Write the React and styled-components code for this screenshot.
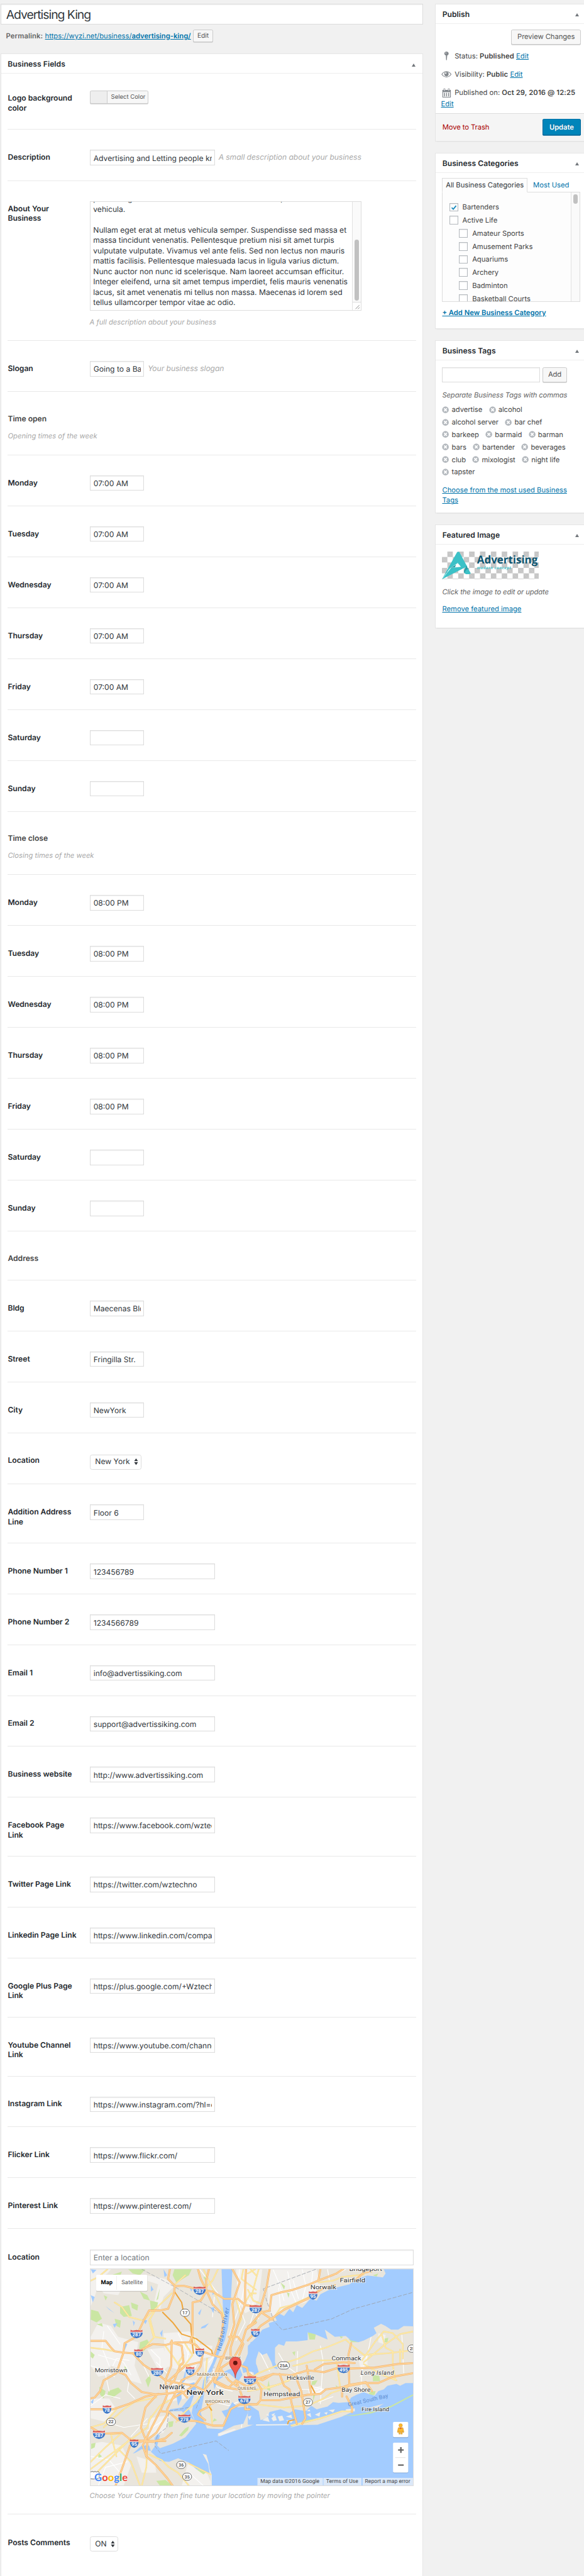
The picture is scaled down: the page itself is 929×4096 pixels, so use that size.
import React from 'react';
import styled, { createGlobalStyle } from 'styled-components';

const GlobalStyle = createGlobalStyle`
  *, *::before, *::after { box-sizing: border-box; }
  html, body { margin: 0; padding: 0; background: #f1f1f1; overflow: hidden; }
  body { font-family: Inter, "Liberation Sans", sans-serif; text-rendering: geometricPrecision; }
  input, button { text-rendering: geometricPrecision; }
`;

const Page = styled.div`
  zoom: 0.8654;
  display: flex;
  align-items: flex-start;
  gap: 22px;
  width: 1073.5px;
  height: 4733px;
  padding-left: 1px;
  overflow: hidden;
  background: #f1f1f1;
  color: #444;
  font-size: 13px;
  line-height: 19px;
`;

const Main = styled.main`
  display: flex;
  flex-direction: column;
  flex: none;
  width: 777px;
  height: 100%;
  padding-top: 7px;
`;

const Sidebar = styled.aside`
  display: flex;
  flex-direction: column;
  gap: 20.5px;
  flex: none;
  width: 280px;
  padding-top: 7px;
`;

const TitleField = styled.input`
  width: 100%;
  height: 38px;
  padding: 2px 8px 0 9px;
  border: 1px solid #ddd;
  background: #fff;
  box-shadow: inset 0 1px 2px rgba(0, 0, 0, 0.07);
  color: #32373c;
  font: 400 22.4px/34px Inter, sans-serif;
  letter-spacing: -1.18px;
  outline: none;
`;

const Permalink = styled.div`
  display: flex;
  align-items: center;
  gap: 4px;
  height: 24px;
  margin: 9px 0 20.5px 10px;
  color: #666;
  strong { font-weight: 600; letter-spacing: 0.1px; }
`;

const Link = styled.a`
  color: #0073aa;
  text-decoration: ${(p) => (p.$plain ? 'none' : 'underline')};
  font-weight: ${(p) => (p.$strong ? 600 : 400)};
  text-underline-offset: 1px;
`;

const Button = styled.button`
  flex: none;
  width: ${(p) => p.$w}px;
  height: ${(p) => p.$h || 28}px;
  padding: 0;
  border: 1px solid #ccc;
  border-radius: 3px;
  background: #f7f7f7;
  box-shadow: 0 1px 0 #ccc;
  color: #555;
  font: 400 ${(p) => p.$size || 13}px/1 Inter, sans-serif;
  letter-spacing: -0.1px;
`;

const PrimaryButton = styled(Button)`
  border-color: #0073aa #006799 #006799;
  background: #0085ba;
  box-shadow: 0 1px 0 #006799;
  color: #fff;
  font-weight: 600;
  text-shadow: 0 -1px 1px #006799;
`;

const Box = styled.section`
  display: flex;
  flex-direction: column;
  flex: ${(p) => (p.$fill ? '1' : 'none')};
  height: ${(p) => (p.$h ? `${p.$h}px` : 'auto')};
  border: 1px solid #e5e5e5;
  ${(p) => p.$fill && 'border-bottom: 0;'}
  background: #fff;
  box-shadow: 0 1px 1px rgba(0, 0, 0, 0.04);
`;

const BoxHeader = styled.header`
  display: flex;
  flex: none;
  align-items: center;
  justify-content: space-between;
  height: 36px;
  padding: 1px 13px 0 12px;
  border-bottom: 1px solid #eee;
  h2 {
    margin: 0;
    color: #23282d;
    font-size: 14px;
    font-weight: 600;
    line-height: 20px;
    letter-spacing: 0.05px;
  }
`;

const Toggle = styled.i`
  width: 0;
  height: 0;
  margin-top: 3px;
  border: solid transparent;
  border-width: 0 4px 6px;
  border-bottom-color: #72777c;
`;

const SideToggle = styled(Toggle)`
  margin-right: 1.5px;
`;

const Rows = styled.div`
  display: flex;
  flex-direction: column;
  padding: 0 12.2px;
`;

const Row = styled.div`
  display: grid;
  grid-template-columns: 150.4px 1fr;
  align-items: start;
  height: ${(p) => p.$h}px;
  padding-top: ${(p) => p.$top ?? 37}px;
  border-bottom: 1px solid ${(p) => (p.$last ? 'transparent' : '#e9e9e9')};
`;

const Label = styled.label`
  width: 130px;
  margin-top: 4.5px;
  color: #23282d;
  font-size: 14px;
  font-weight: 600;
  line-height: 18px;
`;

const GroupRow = styled.div`
  height: ${(p) => p.$h}px;
  padding-top: 40px;
  border-bottom: 1px solid #e9e9e9;
  h3 {
    margin: 0 0 12px;
    color: #444;
    font-size: 14px;
    font-weight: 600;
    line-height: 19px;
  }
`;

const Hint = styled.p`
  margin: 0;
  color: #aaa;
  font-size: ${(p) => p.$size || 13}px;
  font-style: italic;
  line-height: 19px;
  white-space: nowrap;
  letter-spacing: ${(p) => (p.$size === 14 ? -0.07 : 0)}px;
`;

const Inline = styled.div`
  display: flex;
  align-items: center;
  gap: 7px;
`;

const Stack = styled.div`
  display: flex;
  flex-direction: column;
`;

const Input = styled.input`
  width: ${(p) => p.$w || 100}px;
  height: 28.5px;
  padding: 1px 4.5px 0 6px;
  border: 1px solid #ddd;
  background: #fff;
  box-shadow: inset 0 1px 2px rgba(0, 0, 0, 0.07);
  color: #32373c;
  font: 400 14px/20px Inter, sans-serif;
  outline: none;
  &::placeholder { color: #72777c; opacity: 1; }
`;

const Select = styled.div`
  display: flex;
  align-items: center;
  justify-content: space-between;
  width: ${(p) => p.$w}px;
  height: 27.5px;
  margin-top: 2.5px;
  padding: 0 4.5px 0 9px;
  border: 1px solid #ddd;
  border-radius: 4px;
  background: #fff;
  color: #32373c;
  font-size: 14px;
`;

const ColorButton = styled.button`
  display: flex;
  align-items: stretch;
  width: 108.5px;
  height: 24px;
  padding: 0;
  border: 1px solid #ccc;
  border-radius: 3px;
  background: #eee;
  box-shadow: 0 1px 0 #ccc;
  span {
    margin-left: 30px;
    padding-left: 7px;
    flex: 1;
    border-left: 1px solid #ccc;
    border-radius: 0 2px 2px 0;
    background: #f7f7f7;
    color: #555;
    font: 400 11px/22px Inter, sans-serif;
    text-align: left;
  }
`;

const TextBox = styled.div`
  display: flex;
  width: 499.5px;
  height: 201.5px;
  margin-bottom: 11px;
  border: 1px solid #ddd;
  background: #fff;
  overflow: hidden;
`;

const TextLines = styled.div`
  display: flex;
  flex: 1;
  flex-direction: column;
  justify-content: flex-end;
  padding: 0 0 4px 5.5px;
  color: #32373c;
  font-size: 14px;
  line-height: 19.04px;
  white-space: pre;
  span { flex: none; height: 19.04px; }
`;

const ScrollTrack = styled.div`
  display: flex;
  flex-direction: column;
  align-items: center;
  justify-content: space-between;
  width: 15.5px;
  padding-top: ${(p) => p.$top}px;
  border-left: 1px solid #e2e2e2;
  background: #fafafa;
`;

const Thumb = styled.div`
  width: 8px;
  height: ${(p) => p.$h}px;
  border-radius: 4px;
  background: #c1c1c1;
`;

const Resizer = styled.svg`
  width: 14.5px;
  height: 15px;
  border-top: 1px solid #ddd;
  background: #fff;
`;

const MapFrame = styled.div`
  width: 596px;
  height: 400px;
  margin: 6px 0 8px;
  border: 1px solid #ddd;
  svg { display: block; width: 100%; height: 100%; }
`;

const Publish = styled.div`
  display: flex;
  flex: 1;
  flex-direction: column;
  padding: 10px 0 0 9.5px;
  > button { align-self: flex-end; margin: 0 11px 11.5px 0; }
`;

const Status = styled.div`
  display: flex;
  align-items: center;
  gap: 6px;
  height: 19px;
  margin-bottom: 15px;
  white-space: pre;
  b { font-weight: 600; letter-spacing: 0.12px; }
  svg { width: 19px; height: 18px; flex: none; }
`;

const WrapLink = styled(Link)`
  margin-top: -14px;
`;

const Footer = styled.footer`
  display: flex;
  flex: none;
  align-items: center;
  justify-content: space-between;
  height: 51px;
  padding: 0 11px 0 12px;
  border-top: 1px solid #ddd;
  background: #f5f5f5;
  > span { color: #a00; letter-spacing: -0.1px; }
`;

const Content = styled.div`
  display: flex;
  flex-direction: column;
  align-items: flex-start;
  padding: ${(p) => p.$top}px 12px 0 11.7px;
`;

const Tabs = styled.div`
  display: flex;
  align-items: flex-end;
  z-index: 1;
  margin-bottom: -1px;
  span {
    height: 27px;
    padding: 0 5.5px;
    border: 1px solid #ddd;
    border-bottom-color: #fdfdfd;
    background: #fdfdfd;
    color: #32373c;
    line-height: 24px;
    letter-spacing: -0.06px;
  }
  a { padding-left: 10.5px; line-height: 27px; }
`;

const CheckPanel = styled.div`
  display: flex;
  width: 253.5px;
  height: 202px;
  margin-bottom: 10px;
  border: 1px solid #ddd;
  background: #fdfdfd;
  overflow: hidden;
`;

const CheckList = styled.div`
  flex: 1;
  padding: 15px 0 0 12px;
`;

const CheckItem = styled.div`
  display: flex;
  align-items: center;
  gap: 8px;
  height: 24px;
  padding-left: ${(p) => (p.$child ? 18 : 0)}px;
  letter-spacing: -0.03px;
`;

const CheckBox = styled.svg`
  width: 16px;
  height: 16px;
  border: 1px solid #b4b9be;
  background: #fff;
  box-shadow: inset 0 1px 2px rgba(0, 0, 0, 0.1);
`;

const TagForm = styled.div`
  display: flex;
  gap: 4px;
  margin-bottom: 13px;
`;

const SideHint = styled.p`
  margin: 0;
  color: #666;
  font-style: italic;
  line-height: 19px;
  letter-spacing: -0.14px;
`;

const TagLine = styled.div`
  display: flex;
  gap: 12px;
  height: 23px;
  letter-spacing: -0.08px;
`;

const Tag = styled.span`
  display: flex;
  align-items: center;
  gap: 4.5px;
  svg { width: 13px; height: 13px; }
`;

const Tags = styled.div`
  margin: 6px 0 12px;
`;

const Thumbnail = styled.svg`
  width: 177px;
  height: 51px;
  margin-bottom: 13px;
`;

const SpacedLink = styled(Link)`
  margin-top: 13px;
`;

const PinIcon = () => (
  <svg viewBox="0 0 19 18">
    <path d="M9.5 1.2c2.3 0 4 1.5 4 3.6 0 1.600-1 2.900-2.600 3.400l-.7 8.300-.7.8-.7-.8-.4-8.300C6.700 7.700 5.600 6.400 5.600 4.800c0-2.100 1.700-3.600 3.900-3.600z" fill="#82878c" />
    <circle cx="8.500" cy="3.900" r="1" fill="#fff" opacity=".7" />
  </svg>
);

const EyeIcon = () => (
  <svg viewBox="0 0 19 18">
    <path d="M1 9.500C3.500 5.800 6.300 4.400 9.500 4.400s6 1.400 8.500 5.100c-2.500 3.400-5.300 4.800-8.500 4.800S3.500 12.900 1 9.500z" fill="none" stroke="#82878c" strokeWidth="1.300" />
    <circle cx="9.500" cy="8.900" r="4" fill="#82878c" />
    <circle cx="8.200" cy="7.500" r="1.300" fill="#fff" />
  </svg>
);

const CalendarIcon = () => (
  <svg viewBox="0 0 19 18">
    <path d="M2 3.500h15.500v14H2z" fill="#82878c" />
    <path d="M3.300 7.500h12.900v8.700H3.300z" fill="#fff" />
    <path d="M5.900 8.600v6.600M9.750 8.600v6.600M13.600 8.600v6.600" stroke="#82878c" strokeWidth="1.700" />
    <path d="M4.500 1.200h2.400v3.600H4.500zM12.600 1.200H15v3.600h-2.400z" fill="#fff" stroke="#82878c" strokeWidth=".8" />
  </svg>
);

const RemoveIcon = () => (
  <svg viewBox="0 0 13 13">
    <circle cx="6.500" cy="6.500" r="6.100" fill="#b4b9be" />
    <path d="M4 4l5 5M9 4l-5 5" stroke="#fff" strokeWidth="2.100" />
  </svg>
);

const Arrows = () => (
  <svg width="8" height="12" viewBox="0 0 8 12">
    <path d="M4 0l3.500 5h-7zM4 12L.5 7h7z" fill="#32373c" />
  </svg>
);

const checkerCells = [];
for (let r = 0; r < 6; r += 1) {
  for (let c = 0; c < 18; c += 1) if ((r + c) % 2 === 1) checkerCells.push([c * 10, r * 10]);
}

const AdLogo = () => (
  <Thumbnail viewBox="0 0 177 51">
    <rect width="177" height="51" fill="#fff" />
    {checkerCells.map(([x, y]) => (
      <g key={`${x}-${y}`}>
        <rect x={x} y={y} width="10" height="10" fill="#c6c6c6" />
        <path d={`M${x} ${y}l10 10`} stroke="#d6d6d6" strokeWidth=".6" />
      </g>
    ))}
    <path d="M28 .8Q30-.6 32 1l14 26-5 3-12-10-13 10-3 3L0 51z" fill="#3cc1c7" />
    <path d="M25 20h10l12 7L0 51z" fill="#3cc1c7" />
    <path d="M29 21l6 7-19 2z" fill="#fff" />
    <path d="M16 30l10-6-2 5z" fill="#2a9ea6" />
    <path d="M45 26l7.500 13q1 2.500-3 2.500h-5q-4-1-4-5z" fill="#3cc1c7" />
    <path d="M45 26l3 6q-5 1-6 8-1.600-1.500-1.500-5z" fill="#2a9ea6" />
    <text x="64.500" y="22.500" fontFamily="Open Sans, sans-serif" fontWeight="700" fontSize="20" fill="#0d546f" textLength="111.500" lengthAdjust="spacingAndGlyphs">Advertising</text>
    <text x="64" y="32.300" fontFamily="Open Sans, sans-serif" fontWeight="700" fontStyle="italic" fontSize="7.300" fill="#4cc4cb" textLength="63">modern concept</text>
  </Thumbnail>
);

/* Map: drawn at three units per pixel. */

const greens = [
  '480,27 575,27 560,60 510,90 490,100 470,60', '20,250 60,260 80,300 50,320 18,305', '180,235 230,225 245,285 200,290 180,270',
  '240,210 280,225 275,255 245,240', '290,150 330,170 345,200 310,190', '345,200 390,210 380,250 350,255', '290,430 330,415 345,440 310,480 285,465',
  '150,300 185,310 180,350 160,340', '115,700 170,680 190,700 140,735 110,725', '65,675 100,700 90,740 70,720', '320,640 345,610 350,640 335,680',
  '445,870 475,865 470,895 450,900', '540,905 560,895 555,915 520,950 505,945', '225,27 320,27 290,60 250,50', '130,60 190,40 170,90', '18,480 40,500 30,520 18,510',
  '50,330 80,325 85,345', '380,200 400,130 390,190', '890,470 930,460 920,480', '690,870 700,850 715,860', '20,990 45,985 40,1010 20,1020',
  '380,1195 430,1190 470,1222 400,1222', '600,1130 660,1145 640,1160', '1000,640 1010,700 990,690', '90,170 110,180 100,200', '640,70 660,60 650,90',
  '205,560 220,580 205,590', '60,1040 80,1060 60,1070', '720,400 735,420 720,440',
];
const eastGreens = [
  '330,370 375,385 370,415 340,415', '245,485 262,480 258,505', '555,410 590,415 610,430 570,430', '690,610 725,615 730,645 690,645', '665,705 705,700 700,720 675,725',
  '355,645 385,640 370,665 350,665', '360,710 372,720 360,755', '755,410 775,405 770,430 755,430', '180,100 205,120 200,140', '215,155 230,160 225,185', '505,395 525,400 515,410',
  '690,60 720,50 710,68', '485,665 495,675 490,690', '30,310 48,305 45,330 30,330',
];
const pale = [
  '18,27 130,27 60,110 40,180 18,230', '330,60 430,80 480,120 420,180 400,250 370,200 390,110 330,90', '60,320 130,340 170,400 280,430 260,560 300,660 230,640 190,580 130,560 110,610 60,620 18,560 18,400',
  '18,740 120,740 160,800 100,870 18,850', '18,990 80,980 190,1000 240,1110 200,1222 18,1222', '420,380 560,370 620,420 620,540 560,600 430,560',
  '330,470 420,460 450,560 400,600', '640,540 700,500 700,600 650,640', '540,640 600,640 540,740 450,760 430,720 470,650', '600,440 690,450 680,510 620,520',
  '340,850 460,830 420,930 340,950', '820,27 930,27 930,240 870,270 830,200', '270,1060 370,1090 380,1150 300,1150', '560,1080 650,1130 690,1222 520,1222',
  '60,120 200,110 170,170 90,160',
];
const eastPale = ['110,27 380,27 400,120 320,210 200,240 140,300 110,240', '0,27 80,27 60,200 0,220', '720,380 760,390 750,440 720,430', '330,690 400,670 420,700 380,720 340,720', '610,510 660,500 660,560 620,580'];

const highways = [
  '455,27 445,80 483,120 475,170 445,245 400,255 340,255 315,300 285,365 260,405 205,435 198,490 160,600 90,640 70,700 40,735 18,740',
  '483,120 530,118 600,135 690,150 755,190 830,190 870,225 930,232', '610,27 625,80 650,130 690,220 740,270 750,310 740,390 700,500',
  '670,27 655,90 655,150 625,200 580,210 580,390 565,430', '18,422 100,422 130,460 150,480 200,487 300,495', '250,490 310,555 380,600 430,640 500,655 590,670 650,700',
  '300,470 360,440 430,445 480,432 560,430 600,445 630,480 690,500 740,515 800,510', '165,590 210,610 240,655 300,705 380,718 450,712 520,700 550,735',
  '18,800 140,800 230,770 320,730 390,715', '465,420 462,560 430,640 440,720 410,790 350,910 320,970 235,1000 190,1130 155,1222',
  '385,718 320,790 295,900 330,990 325,1060 380,1110 440,1180 470,1222', '300,975 360,980 430,960 465,930', '400,810 450,815 500,860 600,865 620,870',
  '460,430 520,450 530,540 510,560 480,640 440,680', '640,470 625,560 600,600 520,640 470,740 440,800 440,830 380,930 335,965', '18,900 80,935 190,930 240,970 330,975 430,975',
  '740,515 690,640 640,700', '650,860 610,830 620,810 660,790 680,770 740,750', '620,870 690,890 750,890 790,800 840,773 930,773', '870,773 870,800 895,800',
  '800,27 840,100 800,220 810,330 780,430 720,580 700,650', '875,27 870,120 870,220 830,330 790,460 790,540', '930,320 875,360 850,440 800,530 740,570 700,650 760,680 830,690',
  '740,510 820,520 850,560 880,570 890,620', '780,400 830,400 860,440 830,520', '700,640 780,680 820,640 850,720 850,770', '730,570 780,640 850,690 930,650', '320,970 305,1000 325,1060', '820,640 890,680 930,690',
  '450,640 540,560 620,540', '470,740 540,700 600,660 640,600',
];
const eastHighways = [
  '120,27 105,120 75,220 70,270 20,330 0,345', '70,265 120,255 130,170 180,155 250,140 340,110 400,85 490,50 525,27', '0,420 70,340 130,300 200,250 330,190 360,165 420,130 480,115',
  '75,265 135,305', '590,90 640,45 680,40', '0,680 60,630 140,605 240,612 330,585 420,595 500,570 560,575 700,570 830,550 915,545', '50,650 75,690 70,750 50,773 0,773',
  '175,605 200,670 230,690 240,760 270,880', '260,610 295,700 318,850 300,880', '325,560 335,620 350,720', '70,750 170,750 330,720 400,715 430,690 550,675 560,665 650,650 685,700',
  '570,435 555,500 560,665 520,680 520,730', '545,730 575,790 575,815', '560,670 640,655 720,655 800,620 915,600', '390,85 400,27', '0,600 30,620 80,640 140,605', '370,580 420,550 530,540 590,545',
];
const yellows = [
  '150,210 190,235 230,290 310,310 360,260 465,160', '345,300 370,400 290,490', '18,460 100,470 150,480', '340,860 400,780 470,740', '540,60 483,110', '370,260 340,310 365,400 430,410',
  '18,1090 100,1010 190,930', '60,1140 170,1030 240,960', '18,1130 180,1010 330,900 350,840', '90,900 200,800 260,760 380,735', '530,500 500,545 570,570', '430,450 480,520 520,580', '660,520 645,690 600,760 520,830 490,870',
  '180,1030 240,1090 290,1222', '720,27 690,90 650,130', '860,27 850,80 930,140', '160,1060 130,940 190,930', '585,400 600,470', '690,890 680,790 660,770', '640,27 740,240 755,290', '300,1222 325,1120 330,1000',
  '340,1050 410,1080 450,1120 500,1150 560,1222', '560,1100 680,1160', '820,190 850,300 790,420', '540,440 580,500 520,580', '18,900 90,880 160,800', '870,210 900,160 930,160', '900,27 930,60', '110,27 60,70 18,90',
];
const eastYellows = [
  '0,640 60,600 170,555 280,520 360,480 430,460 540,415 590,460 640,500 780,490 880,478', '630,530 700,430 750,370 800,380 855,440 855,520', '640,550 740,610 820,640', '740,390 760,460 800,480 800,560 815,640',
  '60,775 200,790 330,780 420,740 460,710 550,680', '240,890 400,850 520,810 575,812', '490,540 510,680', '640,540 760,440 840,385 915,370', '250,560 380,530 490,530', '20,180 40,100 60,27', '0,140 30,200 80,220',
  '140,300 180,240 240,225 340,180 400,140', '0,700 120,680 230,640 270,600', '390,100 470,90 520,70 640,55', '0,50 40,27', '60,650 100,680 180,660 240,630', '840,470 840,550',
];
const streets = [
  '90,370 80,460 120,560', '60,500 200,540 240,610', '290,520 340,620', '140,560 160,520 230,530', '18,560 80,580 150,620', '230,640 220,700 260,740', '350,470 400,520 400,570', '500,380 560,500', '560,450 540,600',
  '100,610 120,700', '18,780 100,720 180,740', '100,870 200,900 330,880', '240,950 330,850', '18,1060 120,1080 180,1150', '60,1222 100,1120 220,1090', '330,920 420,860', '620,27 720,160', '780,400 850,200 870,100',
  '840,27 820,180 870,320 820,420', '700,760 780,780 830,760', '860,800 850,900', '900,140 920,260 890,350', '650,600 720,680 800,700', '110,340 180,440', '380,540 440,600', '690,290 700,180', '560,1150 640,1222', '670,540 720,480', '600,560 540,640 420,650',
];
const eastStreets = [
  '140,30 170,100 200,200', '220,40 240,150 270,220', '170,130 180,240', '300,27 320,120 300,200', '360,27 350,120', '250,90 280,190', '70,490 120,590', '170,490 210,560 280,610', '400,450 415,530 400,770', '275,480 270,600',
  '630,560 625,700', '680,400 660,500 620,620', '340,670 420,690 360,720', '280,690 390,690', '850,390 860,600', '390,760 470,730', '0,780 40,800 55,880', '575,790 575,835', '0,560 40,640', '440,27 450,90', '480,60 540,27', '0,200 60,300',
];

const westWater = [
  '740,27 800,27 795,130 790,220 775,350 758,420 722,500 690,580 655,650 640,740 625,820 640,860 660,905 745,910 765,850 740,810 775,800 800,760 830,790 880,785 885,820 860,880 810,890 720,935 720,950 810,920 930,880 1130,888 1270,885 1405,840 1460,815 1480,800 1600,790 1700,730 1802,660 1802,1222 685,1222 682,1165 640,1140 600,1130 560,1095 500,1070 450,1090 400,1085 378,1060 350,1035 375,1000 370,960 388,935 400,945 385,1000 400,1015 470,990 540,955 600,880 575,820 585,770 620,740 640,640 690,540 720,460 735,400 750,300 745,180',
  '930,420 900,430 890,480 870,530 850,560 860,600 890,590 930,600', '780,580 840,570 855,610 830,650 815,630 780,600 720,640 700,690 695,650 740,600',
  '455,800 520,790 560,740 600,690 560,800 590,860 540,830 520,810 450,812', '560,660 590,650 600,690 570,700', '490,720 515,700 520,740 500,780', '520,660 545,570 540,640', '220,440 205,475 198,450 210,435',
  '18,27 50,30 30,50', '140,330 165,325 150,350', '60,120 80,100 70,140', '100,230 150,270 120,250', '610,270 630,245 620,280', '630,345 670,325 650,350 625,355', '680,240 700,235 695,270', '300,300 330,310 320,330', '400,380 415,360 412,400',
  '340,1000 350,1030 300,1020 265,1040 250,1045 300,1000', '350,115 365,140 350,150', '420,27 440,60 425,70', '18,170 40,180 30,210', '255,340 250,310 262,320', '565,130 580,140 572,150', '690,140 700,160 690,170', '95,80 105,50 100,100', '18,760 35,740 30,770', '280,90 290,70 288,110',
];
const eastWater = [
  '915,27 750,27 760,50 745,72 700,66 660,62 600,80 560,110 500,125 450,140 400,165 380,200 345,190 300,240 270,225 250,265 230,245 200,285 170,270 150,290 160,310 115,325 120,345 80,360 50,400 30,420 0,450 0,540 20,560 35,610 60,595 50,560 40,540 60,480 80,500 105,490 130,540 140,570 165,580 150,540 150,460 170,440 200,450 210,425 270,425 330,418 330,375 370,385 405,400 440,415 425,360 460,385 480,400 540,395 570,420 610,430 640,420 690,395 710,380 695,350 735,328 760,340 790,360 830,360 860,340 915,342',
  '915,655 870,655 840,670 820,660 770,670 750,690 720,700 700,725 665,715 640,705 600,720 570,735 555,760 500,765 470,760 440,785 380,800 350,780 320,810 260,800 230,820 180,800 120,815 100,850 70,860 60,810 30,790 0,770 0,885 225,888 300,870 400,845 520,810 570,800 580,815 915,725',
];
const islets = [
  '80,860 110,840 120,870', '130,850 150,830 160,860 140,865', '165,840 190,835 200,860 175,865', '210,840 240,830 245,850', '130,830 150,820 140,840', '325,830 345,820 350,845', '370,830 400,815 395,840', '420,820 440,815 435,830', '445,805 480,800 470,818', '325,810 340,800 345,812', '210,860 250,860 240,875', '100,830 115,822 115,840', '0,840 20,835 10,860', '540,800 590,795 590,812 545,812',
];

const shields = [
  [619, 145, '287'], [271, 384, '287'], [282, 491, '80'], [620, 486, '80'], [385, 594, '280'], [567, 588, '95'], [108, 801, '78'], [897, 639, '295'], [866, 748, '678'], [535, 851, '278'], [64, 940, '287'], [258, 989, '95'],
  [928, 247, '287'], [927, 378, '95'], [1245, 171, '95'], [1414, 577, '495'],
];
const routes = [[538, 267, '17'], [130, 869, '22'], [517, 1107, '36'], [550, 1172, '35'], [1083, 558, '25A'], [1217, 761, '27'], [1792, 465, '25']];
const places = [
  [40, 596, 'Morristown', 180, 32], [397, 690, 'Newark', 140, 38], [546, 721, 'New York', 205, 39, 500], [1230, 136, 'Norwalk', 143, 33], [1392, 99, 'Fairfield', 142, 33], [1444, 38, 'Bridgeport', 182, 33],
  [1347, 531, 'Commack', 163, 32], [1099, 638, 'Hicksville', 152, 32], [972, 729, 'Hempstead', 201, 34], [1402, 702, 'Bay Shore', 160, 32], [1513, 811, 'Fire Island', 152, 31],
];
const boroughs = [[760, 525, 'BRONX', 87], [604, 615, 'MANHATTAN', 168], [828, 692, 'QUEENS', 102], [649, 765, 'BROOKLYN', 137]];

const Poly = ({ list, fill }) => list.map((p) => <polygon key={p} points={p} fill={fill} />);
const Lines = ({ list, color, width }) => (
  <g fill="none" stroke={color} strokeWidth={width} strokeLinejoin="round" strokeLinecap="round">
    {list.map((p) => <polyline key={p} points={p} />)}
  </g>
);

const Shield = ({ x, y, n }) => {
  const w = n.length > 2 ? 34 : 24;
  return (
    <g transform={`translate(${x} ${y})`}>
      <path d={`M${-w} -8Q${-w} 18 0 24Q${w} 18 ${w} -8z`} fill="#3e78c9" />
      <path d={`M${-w + 1} -23l${w / 3} 4 ${(w * 2) / 3 - 1} -3 ${(w * 2) / 3} 3 ${w / 3 - 2} -4 1 13H${-w}z`} fill="#d95f5c" />
      <path d={`M${-w} -10H${w}`} stroke="#fff" strokeWidth="3" />
      <text y="14" textAnchor="middle" fontFamily="Roboto, sans-serif" fontSize="27" fontWeight="700" fill="#fff">{n}</text>
    </g>
  );
};

const CityMap = () => (
  <svg viewBox="17 26 1782 1195" preserveAspectRatio="none" fontFamily="Roboto, sans-serif">
    <rect x="0" y="0" width="1820" height="1240" fill="#e9e5dc" />
    <Poly list={pale} fill="#f3f1ee" />
    <Poly list={greens} fill="#cae6a3" />
    <Lines list={streets} color="#fff" width="4" />
    <g transform="translate(885 0)">
      <Poly list={eastPale} fill="#f3f1ee" />
      <Poly list={eastGreens} fill="#cae6a3" />
      <Lines list={eastStreets} color="#fff" width="4" />
    </g>
    <Poly list={westWater} fill="#a3ccff" />
    <g transform="translate(885 0)">
      <Poly list={eastWater} fill="#a3ccff" />
      <Poly list={islets} fill="#f0eee9" />
      <path d="M520 834l60 -2 100 -18 110 -34 125 -65 -1 8 -124 66 -110 34 -100 14z" fill="#cae6a3" />
      <path d="M45 884l180 -2 0 6 -180 2z" fill="#f5f3ee" />
      <path d="M232 902l50 -26 240 -62 60 -2v6l-60 4 -230 64z" fill="#e9e5dc" />
      <path d="M236 900l60 -16 4 -20 100 -15 -40 14z" fill="#cae6a3" />
    </g>
    <path d="M636 1046l20 5 12 40 6 40 12 30v60h-8l2 -55 -26 -10 20 -5 -8 -50z" fill="#efece5" />
    <path d="M720 935l90 -28 10 6 -90 36z" fill="#f3f1ee" />
    <g fill="none" stroke="#9aa0a8" strokeWidth="2.500" strokeDasharray="22 8">
      <path d="M300 27L483 125 740 275" />
      <path d="M600 795l30 -80 70 -150" />
      <path d="M560 790l-110 20 -12 90 -50 40 -18 60 35 45 305 -70 70 53" strokeWidth="3" />
      <path d="M1260 27L970 135l20 70 40 110 45 47 270 -60 120 -55 340 -95" strokeWidth="3" />
    </g>
    <Lines list={yellows} color="#f3d68a" width="8" />
    <Lines list={yellows} color="#ffeba8" width="5" />
    <g transform="translate(885 0)">
      <Lines list={eastYellows} color="#f3d68a" width="8" />
      <Lines list={eastYellows} color="#ffeba8" width="5" />
    </g>
    <Lines list={['415,265 470,320 520,385 600,410 685,475 690,495', '480,150 520,210 535,290 570,330 578,430 585,490', '660,770 685,805', '1235,670 1255,710', '1105,880 1110,865 1140,858']} color="#eea63c" width="7" />
    <Lines list={highways} color="#f0b473" width="11" />
    <g transform="translate(885 0)"><Lines list={eastHighways} color="#f0b473" width="11" /></g>
    <Lines list={highways} color="#ffd294" width="7" />
    <g transform="translate(885 0)"><Lines list={eastHighways} color="#ffd294" width="7" /></g>

    {shields.map(([x, y, n]) => <Shield key={`${x}${n}`} x={x} y={y} n={n} />)}
    {routes.map(([x, y, n]) => {
      const w = n.length > 2 ? 32 : 25;
      return (
        <g key={n} transform={`translate(${x} ${y})`}>
          <rect x={-w} y="-20" width={w * 2} height="40" rx="20" fill="#fff" stroke="#555" strokeWidth="3" />
          <text y="9" textAnchor="middle" fontSize="25" fontWeight="500" fill="#444">{n}</text>
        </g>
      );
    })}

    <g paintOrder="stroke" stroke="#fff" strokeOpacity=".75" strokeWidth="6" strokeLinejoin="round">
      {boroughs.map(([x, y, t, w]) => (
        <text key={t} x={x} y={y} fontSize="25" fontWeight="500" fill="#9b8a6c" textLength={w} lengthAdjust="spacingAndGlyphs">{t}</text>
      ))}
      {places.map(([x, y, t, w, s, wt]) => (
        <text key={t} x={x} y={y} fontSize={s} fontWeight={wt || 400} fill="#333" textLength={w} lengthAdjust="spacingAndGlyphs">{t}</text>
      ))}
      <text x="1508" y="609" fontSize="33" fontStyle="italic" fill="#333" textLength="182">Long Island</text>
    </g>
    <text transform="translate(736 478) rotate(-79)" fontSize="34" fontStyle="italic" fill="#4f83c8" textLength="240">Hudson River</text>
    <text transform="translate(1440 785) rotate(-13)" fontSize="30" fill="#5b8bd0" textLength="226">Great South Bay</text>

    <path d="M816 628C812 580 784 575 784 543a32 32 0 0 1 64 0C848 575 820 580 816 628z" fill="#f25a50" stroke="#b5352e" strokeWidth="2.500" />
    <circle cx="816" cy="544" r="12" fill="#641510" />

    <rect x="48" y="60" width="283" height="91" rx="6" fill="#000" opacity=".13" />
    <rect x="48" y="57" width="282" height="90" rx="6" fill="#fff" />
    <path d="M160.500 64v76" stroke="#e4e4e4" strokeWidth="2.500" />
    <text x="74" y="111" fontSize="32" fontWeight="700" fill="#000" textLength="64">Map</text>
    <text x="188" y="111" fontSize="32" fill="#565656" textLength="117">Satellite</text>

    <g transform="translate(885 0)">
      <rect x="801" y="874" width="84" height="84" rx="6" fill="#000" opacity=".15" />
      <rect x="801" y="870" width="84" height="84" rx="6" fill="#fff" />
      <circle cx="843" cy="889" r="10" fill="#fbb82e" stroke="#c98a1c" strokeWidth="1.500" />
      <path d="M830 902h26l5 24 -5 3 -4 -10v18h-7v-12h-4v12h-7v-18l-4 10 -5 -3z" fill="#fbb82e" stroke="#c98a1c" strokeWidth="2" />
      <path d="M834 902h18l-9 8z" fill="#e2572e" />
      <rect x="801" y="988" width="84" height="165" rx="6" fill="#000" opacity=".15" />
      <rect x="801" y="984" width="84" height="165" rx="6" fill="#fff" />
      <path d="M813 1066.500h57" stroke="#e0e0e0" strokeWidth="3" />
      <path d="M829 1025h31M844.500 1009v32M829 1108h31" stroke="#666" strokeWidth="8" />
      <rect x="53" y="1179" width="361" height="44" fill="#dbe8f8" />
      <rect x="417" y="1179" width="210" height="44" fill="#dbe8f8" />
      <rect x="633" y="1179" width="285" height="44" fill="#dbe8f8" />
      <g fontSize="29.500" fill="#444">
        <text x="69" y="1208" textLength="326">Map data ©2016 Google</text>
        <text x="432" y="1208" textLength="177">Terms of Use</text>
        <text x="646" y="1208" textLength="250">Report a map error</text>
      </g>
    </g>
    <path d="M18 1146q10 -6 16 0 8 -5 16 0 8 -5 15 2v30q-16 10 -47 6" fill="#fff" stroke="#555" strokeWidth="3" />
    <text x="38" y="1197" fontFamily="Lato, sans-serif" fontSize="57" fontWeight="700" textLength="184" lengthAdjust="spacingAndGlyphs" paintOrder="stroke" stroke="#fff" strokeWidth="3">
      <tspan fill="#4285f4">G</tspan><tspan fill="#ea4335">o</tspan><tspan fill="#fbbc05">o</tspan><tspan fill="#4285f4">g</tspan><tspan fill="#34a853">l</tspan><tspan fill="#ea4335">e</tspan>
    </text>
  </svg>
);

const aboutLines = [
  'porta congue. Morbi hendrerit sem ac libero facilisis, ac rutrum mi',
  'vehicula.',
  '',
  'Nullam eget erat at metus vehicula semper. Suspendisse sed massa et',
  'massa tincidunt venenatis. Pellentesque pretium nisi sit amet turpis',
  'vulputate vulputate. Vivamus vel ante felis. Sed non lectus non mauris',
  'mattis facilisis. Pellentesque malesuada lacus in ligula varius dictum.',
  'Nunc auctor non nunc id scelerisque. Nam laoreet accumsan efficitur.',
  'Integer eleifend, urna sit amet tempus imperdiet, felis mauris venenatis',
  'lacus, sit amet venenatis mi tellus non massa. Maecenas id lorem sed',
  'tellus ullamcorper tempor vitae ac odio.',
];

const weekdays = ['Monday', 'Tuesday', 'Wednesday', 'Thursday', 'Friday'];
const hours = (time) => [...weekdays.map((d) => [d, time]), ['Saturday', ''], ['Sunday', '']];

const contacts = [
  ['Phone Number 1', '123456789', 93.4],
  ['Phone Number 2', '1234566789', 93],
  ['Email 1', 'info@advertissiking.com', 93.4],
  ['Email 2', 'support@advertissiking.com', 93.4],
  ['Business website', 'http://www.advertissiking.com', 93.4],
  ['Facebook Page Link', 'https://www.facebook.com/wztechno', 108.5],
  ['Twitter Page Link', 'https://twitter.com/wztechno', 93.4],
  ['Linkedin Page Link', 'https://www.linkedin.com/company/wztechno', 93.4],
  ['Google Plus Page Link', 'https://plus.google.com/+Wztechno', 108.5],
  ['Youtube Channel Link', 'https://www.youtube.com/channel/wztechno', 108.5],
  ['Instagram Link', 'https://www.instagram.com/?hl=en', 93.4],
  ['Flicker Link', 'https://www.flickr.com/', 93.4],
  ['Pinterest Link', 'https://www.pinterest.com/', 93.4],
];

const categories = ['Amateur Sports', 'Amusement Parks', 'Aquariums', 'Archery', 'Badminton', 'Basketball Courts'];
const tagLines = [['advertise', 'alcohol'], ['alcohol server', 'bar chef'], ['barkeep', 'barmaid', 'barman'], ['bars', 'bartender', 'beverages'], ['club', 'mixologist', 'night life'], ['tapster']];

const Field = ({ label, value, w, h = 93.6 }) => (
  <Row $h={h}>
    <Label>{label}</Label>
    <Input $w={w} readOnly value={value} />
  </Row>
);

const SideBox = ({ title, h, children }) => (
  <Box $h={h}>
    <BoxHeader><h2>{title}</h2><SideToggle /></BoxHeader>
    {children}
  </Box>
);

export default function App() {
  return (
    <>
      <GlobalStyle />
      <Page>
        <Main>
          <TitleField readOnly value="Advertising King" />
          <Permalink>
            <strong>Permalink:</strong>
            <Link>https://wyzi.net/business/<Link as="b" $strong>advertising-king/</Link></Link>
            <Button $w={37} $h={23} $size={12}>Edit</Button>
          </Permalink>
          <Box $fill>
            <BoxHeader><h2>Business Fields</h2><Toggle /></BoxHeader>
            <Rows>
              <Row $h={102.8} $top={31}>
                <Label>Logo background color</Label>
                <ColorButton><span>Select Color</span></ColorButton>
              </Row>
              <Row $h={94}>
                <Label>Description</Label>
                <Inline>
                  <Input $w={230} readOnly value="Advertising and Letting people know" />
                  <Hint $size={14}>A small description about your business</Hint>
                </Inline>
              </Row>
              <Row $h={294}>
                <Label>About Your Business</Label>
                <Stack>
                  <TextBox>
                    <TextLines>{aboutLines.map((t, i) => <span key={i}>{t}</span>)}</TextLines>
                    <ScrollTrack $top={69.5}>
                      <Thumb $h={112} />
                      <Resizer viewBox="0 0 14 14"><path d="M5 12l7 -7M9.500 12l3 -3" stroke="#666" strokeWidth=".9" /></Resizer>
                    </ScrollTrack>
                  </TextBox>
                  <Hint>A full description about your business</Hint>
                </Stack>
              </Row>
              <Row $h={94}>
                <Label>Slogan</Label>
                <Inline>
                  <Input readOnly value="Going to a Bar" />
                  <Hint $size={14}>Your business slogan</Hint>
                </Inline>
              </Row>
              <GroupRow $h={115.8}><h3>Time open</h3><Hint>Opening times of the week</Hint></GroupRow>
              {hours('07:00 AM').map(([d, t]) => <Field key={d} label={d} value={t} />)}
              <GroupRow $h={116}><h3>Time close</h3><Hint>Closing times of the week</Hint></GroupRow>
              {hours('08:00 PM').map(([d, t]) => <Field key={d} label={d} value={t} />)}
              <GroupRow $h={90}><h3>Address</h3></GroupRow>
              <Field label="Bldg" value="Maecenas Bldg" h={93.5} />
              <Field label="Street" value="Fringilla Str." h={93.5} />
              <Field label="City" value="NewYork" h={93.5} />
              <Row $h={94.4}>
                <Label>Location</Label>
                <Select $w={95.5}>New York<Arrows /></Select>
              </Row>
              <Field label="Addition Address Line" value="Floor 6" h={108.8} />
              {contacts.map(([l, v, h]) => <Field key={l} label={l} value={v} w={230} h={h} />)}
              <Row $h={524.5} $top={38}>
                <Label>Location</Label>
                <Stack>
                  <Input $w={596} placeholder="Enter a location" />
                  <MapFrame><CityMap /></MapFrame>
                  <Hint>Choose Your Country then fine tune your location by moving the pointer</Hint>
                </Stack>
              </Row>
              <Row $h={110} $top={38} $last>
                <Label>Posts Comments</Label>
                <Select $w={52.5}>ON<Arrows /></Select>
              </Row>
            </Rows>
          </Box>
        </Main>

        <Sidebar>
          <SideBox title="Publish" h={253}>
            <Publish>
              <Button $w={128} $h={27.5}>Preview Changes</Button>
              <Status><PinIcon /><span>Status: <b>Published</b> <Link>Edit</Link></span></Status>
              <Status><EyeIcon /><span>Visibility: <b>Public</b> <Link>Edit</Link></span></Status>
              <Status><CalendarIcon /><span>Published on: <b>Oct 29, 2016 @ 12:25</b></span></Status>
              <WrapLink>Edit</WrapLink>
            </Publish>
            <Footer>
              <span>Move to Trash</span>
              <PrimaryButton $w={71} $h={30}>Update</PrimaryButton>
            </Footer>
          </SideBox>

          <SideBox title="Business Categories" h={324}>
            <Content $top={9}>
              <Tabs><span>All Business Categories</span><Link $plain>Most Used</Link></Tabs>
              <CheckPanel>
                <CheckList>
                  <CheckItem>
                    <CheckBox viewBox="0 0 14 14"><path d="M3 7.200l3 3L11.300 3.600" fill="none" stroke="#1e8cbe" strokeWidth="2.200" /></CheckBox>
                    Bartenders
                  </CheckItem>
                  <CheckItem><CheckBox />Active Life</CheckItem>
                  {categories.map((c) => <CheckItem key={c} $child><CheckBox />{c}</CheckItem>)}
                </CheckList>
                <ScrollTrack $top={3}><Thumb $h={18} /></ScrollTrack>
              </CheckPanel>
              <Link $strong>+ Add New Business Category</Link>
            </Content>
          </SideBox>

          <SideBox title="Business Tags" h={318.5}>
            <Content $top={12.5}>
              <TagForm><Input $w={180} readOnly value="" /><Button $w={46}>Add</Button></TagForm>
              <SideHint>Separate Business Tags with commas</SideHint>
              <Tags>
                {tagLines.map((line) => (
                  <TagLine key={line[0]}>{line.map((t) => <Tag key={t}><RemoveIcon />{t}</Tag>)}</TagLine>
                ))}
              </Tags>
              <Link>Choose from the most used Business<br />Tags</Link>
            </Content>
          </SideBox>

          <SideBox title="Featured Image" h={190}>
            <Content $top={12.5}>
              <AdLogo />
              <SideHint>Click the image to edit or update</SideHint>
              <SpacedLink>Remove featured image</SpacedLink>
            </Content>
          </SideBox>
        </Sidebar>
      </Page>
    </>
  );
}
